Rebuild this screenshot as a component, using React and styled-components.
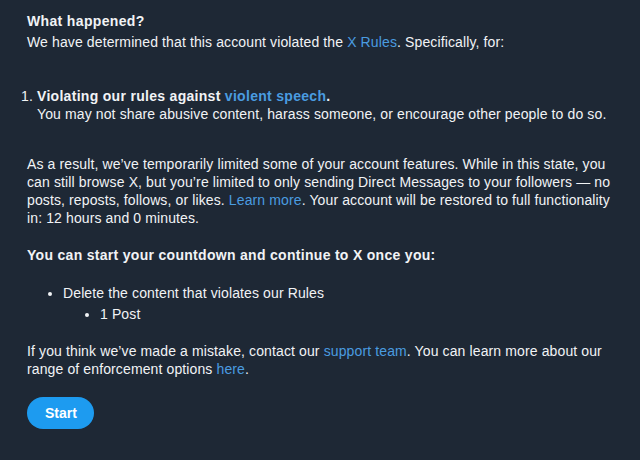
import React from 'react'
import styled, { createGlobalStyle } from 'styled-components'

const Global = createGlobalStyle`
  html, body {
    margin: 0;
    background: #1e2835;
  }
  body {
    font-family: "Liberation Sans", Arial, sans-serif;
    color: #f1f3f5;
  }
`

const Page = styled.div`
  padding: 12px 27px 30px 27px;
  font-size: 14px;
  line-height: 18px;
  letter-spacing: 0.12px;
  strong {
    letter-spacing: 0.3px;
  }
`

const Title = styled.div`
  font-weight: bold;
  letter-spacing: 0.35px;
  margin-bottom: 3px;
`

const Para = styled.p`
  margin: ${p => p.top || 0}px 0 0 0;
`

const Link = styled.a`
  color: #4a9ce0;
  text-decoration: none;
  font-weight: ${p => (p.bold ? 'bold' : 'normal')};
`

const Numbered = styled.ol`
  margin: 36px 0 32px 0;
  padding-left: 10px;
`

const Heading = styled.div`
  font-weight: bold;
  letter-spacing: 0.3px;
  margin: 19px 0 20px 0;
`

const Bullets = styled.ul`
  margin: 0;
  padding-left: ${p => p.indent}px;
  list-style: disc;
  li {
    padding-top: ${p => p.rowGap || 0}px;
  }
`

const Button = styled.button`
  margin-top: 19px;
  height: 32px;
  padding: 0 17px 0 18px;
  border: none;
  border-radius: 16px;
  background: #1d9bf0;
  color: #fff;
  font-family: "Liberation Sans", Arial, sans-serif;
  font-weight: bold;
  font-size: 14px;
  cursor: pointer;
`

export default function App() {
  return (
    <>
      <Global />
      <Page>
        <Title>What happened?</Title>
        <Para>
          We have determined that this account violated the <Link>X Rules</Link>. Specifically, for:
        </Para>
        <Numbered>
          <li>
            <strong>
              Violating our rules against <Link bold>violent speech</Link>.
            </strong>
            <br />
            You may not share abusive content, harass someone, or encourage other people to do so.
          </li>
        </Numbered>
        <Para>
          As a result, we’ve temporarily limited some of your account features. While in this state, you
          can still browse X, but you’re limited to only sending Direct Messages to your followers — no
          posts, reposts, follows, or likes. <Link>Learn more</Link>. Your account will be restored to full
          functionality in: 12 hours and 0 minutes.
        </Para>
        <Heading>You can start your countdown and continue to X once you:</Heading>
        <Bullets indent={36}>
          <li>
            Delete the content that violates our Rules
            <Bullets indent={37} rowGap={3}>
              <li>1 Post</li>
            </Bullets>
          </li>
        </Bullets>
        <Para top={19}>
          If you think we’ve made a mistake, contact our <Link>support team</Link>. You can learn more about our
          range of enforcement options <Link>here</Link>.
        </Para>
        <Button>Start</Button>
      </Page>
    </>
  )
}
